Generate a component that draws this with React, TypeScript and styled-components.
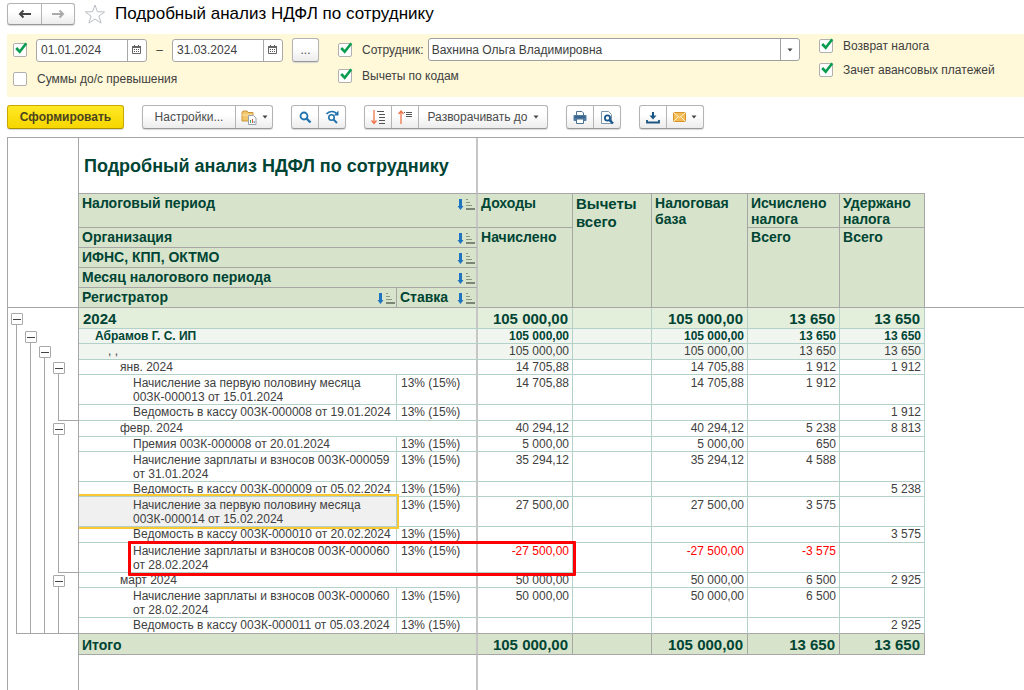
import React, { useState } from "react";
import styled, { createGlobalStyle, css } from "styled-components";

const ink = "#404040";
const green = "#004434";
const gridLine = "#b3d1c8";
const grayLine = "#a6a6a6";
const paleLine = "#c6c6c6";
const headFill = "#d7e4cb";

const GlobalStyle = createGlobalStyle`
  *, *::before, *::after { box-sizing: border-box; }
  body {
    margin: 0;
    background: #fff;
    color: ${ink};
    font: 12px/16px "Liberation Sans", Arial, sans-serif;
  }
  button, input, select { font: inherit; color: inherit; margin: 0; }
`;

const Page = styled.div`
  display: flex;
  flex-direction: column;
  min-height: 100vh;
  padding-left: 7px;
`;

/* ---------- window header ---------- */

const WindowHeader = styled.header`
  display: flex;
  align-items: center;
  height: 28px;
  margin-bottom: 6px;
`;

const PageTitle = styled.h1`
  margin: 0 0 0 9px;
  font-size: 17px;
  line-height: 20px;
  font-weight: 400;
  color: #000;
`;

const StarButton = styled.button`
  display: flex;
  padding: 0;
  margin-left: 9px;
  border: 0;
  background: none;
`;

/* ---------- buttons ---------- */

const ButtonGroup = styled.div<{ $height?: number }>`
  display: flex;
  height: ${(p) => p.$height ?? 24}px;
  border: 1px solid #b4b4b4;
  border-bottom-color: #989898;
  border-radius: 3px;
  background: linear-gradient(#fff 40%, #ececec);
  box-shadow: 0 1px 1px #d8d8d8;
`;

const MoreGroup = styled(ButtonGroup)`
  margin-left: 9px;
`;

const ToolButton = styled.button<{ $width: number }>`
  display: flex;
  align-items: center;
  justify-content: center;
  gap: 5px;
  width: ${(p) => p.$width}px;
  padding: 0;
  border: 0;
  background: none;
  color: #4c4c4c;
  white-space: nowrap;
  & + & { border-left: 1px solid #b4b4b4; }
`;

const PrimaryButton = styled.button`
  width: 117px;
  height: 24px;
  padding: 0;
  border: 1px solid #c9a800;
  border-bottom-color: #a89000;
  border-radius: 3px;
  background: linear-gradient(#ffe825, #f7d600);
  box-shadow: 0 1px 1px #d8d8d8;
  color: #4a4420;
  font-weight: 700;
`;

const Toolbar = styled.div`
  display: flex;
  align-items: center;
  gap: 18px;
  height: 40px;
`;

/* ---------- filter panel ---------- */

const FilterPanel = styled.section`
  display: flex;
  height: 63px;
  padding: 4px 0 0 6px;
  background: #fff9d9;
`;

const FilterColumn = styled.div<{ $gap: number }>`
  display: flex;
  flex-direction: column;
  gap: ${(p) => p.$gap}px;
`;

const WideColumn = styled(FilterColumn)`
  flex: 1;
  margin: 0 19px;
`;

const SideColumn = styled(FilterColumn)`
  width: 205px;
`;

const FilterRow = styled.div<{ $height: number }>`
  display: flex;
  align-items: center;
  height: ${(p) => p.$height}px;
`;

const PeriodRow = styled(FilterRow)`
  & > label { margin-right: 9px; }
`;

const CheckLabel = styled.label`
  display: inline-flex;
  align-items: center;
  gap: 10px;
  white-space: nowrap;
`;

const CheckBox = styled.span`
  position: relative;
  display: block;
  width: 14px;
  height: 14px;
  input {
    display: block;
    appearance: none;
    width: 14px;
    height: 14px;
    border: 1px solid #b0b0b0;
    border-radius: 2px;
    background: #fff;
  }
  svg {
    position: absolute;
    left: 2px;
    top: -1px;
    pointer-events: none;
  }
`;

const Field = styled.div`
  display: flex;
  width: 111px;
  height: 23px;
  border: 1px solid #a8a8a8;
  border-radius: 3px;
  background: #fff;
  overflow: hidden;
  input {
    flex: 1;
    min-width: 0;
    padding: 0 0 0 4px;
    border: 0;
    background: none;
  }
  button {
    display: flex;
    align-items: center;
    justify-content: center;
    width: 19px;
    padding: 0;
    border: 0;
    border-left: 1px solid #a8a8a8;
    background: none;
  }
`;

const Dash = styled.span`
  width: 25px;
  text-align: center;
`;

const ComboBox = styled.div`
  display: grid;
  grid-template-columns: 1fr 19px;
  flex: 1;
  height: 23px;
  margin-left: 4px;
  border: 1px solid #a0a0a0;
  border-radius: 3px;
  background: #fff;
  select {
    grid-area: 1 / 1 / 2 / 3;
    appearance: none;
    padding: 0 20px 0 3px;
    border: 0;
    background: none;
  }
  span {
    grid-area: 1 / 2;
    display: flex;
    align-items: center;
    justify-content: center;
    border-left: 1px solid #a0a0a0;
    pointer-events: none;
  }
`;

/* ---------- report ---------- */

const Report = styled.main`
  display: flex;
  flex: 1;
  flex-direction: column;
  border-top: 1px solid ${grayLine};
  border-left: 1px solid ${grayLine};
`;

const Table = styled.table`
  width: 100%;
  table-layout: fixed;
  border-collapse: separate;
  border-spacing: 0;
  th, td { padding: 0; vertical-align: top; }
`;

const Col = styled.col<{ $width: number }>`
  width: ${(p) => p.$width}px;
`;

const Corner = styled.td`
  border-right: 1px solid ${grayLine};
  border-bottom: 1px solid ${grayLine};
`;

const TitleCell = styled.th`
  height: 56px;
  border-right: 2px solid ${paleLine};
  border-bottom: 1px solid ${grayLine};
  color: ${green};
  font-size: 18px;
  line-height: 56px;
  text-align: left;
  white-space: nowrap;
`;

const TitleText = styled.div`
  height: 55px;
  padding-left: 5px;
`;

const TitleRest = styled.td`
  border-bottom: 1px solid ${grayLine};
`;

const HeadCell = styled.th<{ $height: number; $large?: boolean; $frozen?: boolean }>`
  height: ${(p) => p.$height}px;
  border-right: ${(p) => (p.$frozen ? `2px solid ${paleLine}` : `1px solid ${grayLine}`)};
  border-bottom: 1px solid ${grayLine};
  background: ${headFill};
  color: ${green};
  font-size: ${(p) => (p.$large ? 15 : 14)}px;
  line-height: ${(p) => (p.$large ? 18 : 16)}px;
  text-align: left;
`;

const HeadInner = styled.div`
  display: flex;
  justify-content: space-between;
  padding: 1px 1px 0 3px;
  svg { margin-top: 3px; flex: none; }
`;

const HeadRest = styled.td`
  border-bottom: 1px solid ${grayLine};
`;

type Kind = "year" | "org" | "code" | "plain" | "total";

const rowFill: Record<Kind, string> = {
  year: "#e3eedb",
  org: "#f0f5ef",
  code: "#f0f5ef",
  plain: "#fff",
  total: headFill,
};

const Row = styled.tr<{ $kind: Kind; $height: number; $lastBody?: boolean }>`
  & > .cell {
    height: ${(p) => p.$height}px;
    padding-top: ${(p) => (p.$height === 30 ? 1 : p.$height === 21 ? 2 : 0)}px;
    background: ${(p) => rowFill[p.$kind]};
    border-right: 1px solid ${(p) => (p.$kind === "total" ? grayLine : gridLine)};
    border-bottom: 1px solid
      ${(p) => (p.$kind === "total" || p.$lastBody ? grayLine : gridLine)};
    line-height: 14px;
    ${(p) =>
      (p.$kind === "year" || p.$kind === "total") &&
      css`
        color: ${green};
        font-size: 15px;
        line-height: 18px;
        font-weight: 700;
      `}
    ${(p) =>
      p.$kind === "org" &&
      css`
        color: ${green};
        font-weight: 700;
      `}
  }
  & > .cell.frozen { border-right: 2px solid ${paleLine}; }
  & > .cell.selected { background: #f0f0f0; }
`;

const NameCell = styled.th<{ $indent: number }>`
  position: relative;
  font-weight: 400;
  text-align: left;
  & > div { padding-left: ${(p) => p.$indent}px; }
`;

const TotalLabel = styled.div`
  font-size: 14px;
`;

const RateCell = styled.td`
  & > div { padding-left: 4px; }
`;

const NumberCell = styled.td<{ $negative?: boolean; $large?: boolean }>`
  text-align: right;
  & > div {
    padding-right: ${(p) => (p.$large ? 4 : 3)}px;
    ${(p) => p.$negative && "color: #f00;"}
  }
`;

const Selection = styled.span`
  position: absolute;
  z-index: 1;
  inset: -3px -3px -3px 0;
  border: 2px solid #f9c832;
  border-left: 0;
  pointer-events: none;
`;

const RedFrame = styled.span`
  position: absolute;
  z-index: 2;
  left: 49px;
  top: -2px;
  width: 448px;
  height: 35px;
  border: 3px solid #f00;
  border-radius: 1px;
  pointer-events: none;
`;

const GutterCell = styled.td<{ $closeFrom?: number }>`
  position: relative;
  border-right: 1px solid ${grayLine};
  ${(p) =>
    p.$closeFrom !== undefined &&
    css`
      &::after {
        content: "";
        position: absolute;
        right: 0;
        bottom: 0;
        left: ${8 + 14 * p.$closeFrom}px;
        height: 1px;
        background: ${grayLine};
      }
    `}
`;

const Lanes = styled.div<{ $height: number }>`
  display: flex;
  height: ${(p) => p.$height}px;
  padding-left: 2px;
`;

const Lane = styled.div`
  display: flex;
  flex-direction: column;
  width: 14px;
`;

const Stem = styled.span`
  flex: 1;
  width: 1px;
  margin-left: 6px;
  background: ${grayLine};
`;

const Toggle = styled.button<{ $top: number }>`
  display: flex;
  align-items: center;
  justify-content: center;
  width: 12px;
  height: 12px;
  margin: ${(p) => p.$top}px 0 0 1px;
  padding: 0;
  border: 1px solid #a8a8a8;
  border-radius: 1px;
  background: #fff;
  &::before {
    content: "";
    width: 8px;
    height: 1px;
    background: #444;
  }
`;

const Tail = styled.div`
  display: grid;
  flex: 1;
  grid-template-columns: 71px 399px 1fr;
  span:nth-child(1) { border-right: 1px solid ${grayLine}; }
  span:nth-child(2) { border-right: 2px solid ${paleLine}; }
`;

/* ---------- icons ---------- */

const ArrowIcon = ({ back, color }: { back?: boolean; color: string }) => (
  <svg width="14" height="10" viewBox="0 0 14 10" fill="none" stroke={color} strokeWidth="2">
    {back ? <path d="M13 5H2M5.500 1.500L2 5l3.500 3.500" /> : <path d="M1 5h11M8.500 1.500L12 5 8.500 8.500" />}
  </svg>
);

const StarIcon = () => (
  <svg width="22" height="20" viewBox="0 0 22 20" fill="#fff" stroke="#b9bec4" strokeWidth="1">
    <path d="M11 1l2.400 6.700 7.200.2-5.700 4.200 2.200 7L11 15l-6.100 4.100 2.200-7L1.400 7.900l7.200-.2z" />
  </svg>
);

const CheckMark = () => (
  <svg width="13" height="13" viewBox="0 0 13 13" fill="none" stroke="#0a9d50" strokeWidth="2.600">
    <path d="M1.200 6l3.500 3.700L11.300 1.300" />
  </svg>
);

const CalendarIcon = () => (
  <svg width="10" height="10" viewBox="0 0 10 10">
    <path d="M0.500 1.500h8v7h-8z" fill="#fff" stroke="#666" />
    <path d="M0 1h9v2H0zM2 0h1v2H2zM6 0h1v2H6z" fill="#666" />
    <path d="M2 4h1v1H2zM4 4h1v1H4zM6 4h1v1H6zM2 6h1v1H2zM4 6h1v1H4zM6 6h1v1H6z" fill="#555" />
  </svg>
);

const Caret = () => (
  <svg width="6" height="4" viewBox="0 0 6 4">
    <path d="M0.500 0.500h5L3 3.500z" fill="#444" />
  </svg>
);

const FolderIcon = () => (
  <svg width="16" height="15" viewBox="0 0 16 15">
    <path d="M1 2.500L2 1h4l1 1.500h5V11H1z" fill="#f2c66b" stroke="#c9953a" />
    <path d="M1 5h11" stroke="#fbe3ad" />
    <path d="M7.500 5.500h5l2.500 2.500v6.500H7.500z" fill="#fff" stroke="#9aa3ad" />
    <path d="M9.500 10v3" stroke="#3fae6a" />
    <path d="M11.500 9v4" stroke="#e0574a" />
    <path d="M13.200 11v2" stroke="#3d7fc0" />
  </svg>
);

const SearchIcon = () => (
  <svg width="13" height="13" viewBox="0 0 13 13" fill="none" stroke="#2273ad">
    <circle cx="5" cy="5" r="3.500" strokeWidth="1.800" />
    <path d="M7.500 7.500l4 4" strokeWidth="2.400" />
  </svg>
);

const SearchNextIcon = () => (
  <svg width="15" height="14" viewBox="0 0 15 14" fill="none" stroke="#2273ad">
    <circle cx="6.500" cy="7.500" r="2.700" strokeWidth="1.600" />
    <path d="M8.500 9.500l3.500 3.500" strokeWidth="2" />
    <path d="M1.500 4C4 1 9 0.500 11.500 3.500" strokeWidth="1.600" />
    <path d="M13.500 0.500v5H8.800z" fill="#2273ad" stroke="none" />
  </svg>
);

const ExpandIcon = () => (
  <svg width="15" height="15" viewBox="0 0 15 15" fill="none">
    <path d="M3 0v13M0.500 10.500L3 13.500l2.500-3" stroke="#f0764a" strokeWidth="1.300" />
    <path d="M6 1.500h7M8 4.500h6M8 7.500h6M8 10.500h6M8 13.500h6" stroke="#555" />
  </svg>
);

const CollapseIcon = () => (
  <svg width="15" height="15" viewBox="0 0 15 15" fill="none">
    <path d="M3 14V1.500M0.500 4L3 1l2.500 3" stroke="#f0764a" strokeWidth="1.300" />
    <path d="M6 2.500h1M8 2.500h6M8 4.500h6M8 6.500h6" stroke="#555" />
  </svg>
);

const PrintIcon = () => (
  <svg width="14" height="13" viewBox="0 0 14 13">
    <path d="M3.500 4.500v-4h5.500l1.500 1.500v2.500" fill="#fff" stroke="#4f7190" />
    <rect x="0.500" y="4" width="13" height="6" rx="1" fill="#4f7ba3" />
    <path d="M2 6h10" stroke="#244f76" />
    <path d="M3.500 8h7v4.500h-7z" fill="#fff" stroke="#4f7190" />
  </svg>
);

const PreviewIcon = () => (
  <svg width="14" height="15" viewBox="0 0 14 15" fill="none">
    <path d="M1.500 1.500h7l3 3v9h-10z" fill="#fff" stroke="#7e95aa" />
    <circle cx="7.500" cy="8" r="2.600" stroke="#17578c" strokeWidth="1.800" fill="#fff" />
    <path d="M9.500 10l3.500 3.500" stroke="#17578c" strokeWidth="2.400" />
  </svg>
);

const SaveIcon = () => (
  <svg width="14" height="13" viewBox="0 0 14 13" fill="none" stroke="#1b5683">
    <path d="M7 1v6" strokeWidth="2" />
    <path d="M3.500 4.500h7L7 8.500z" fill="#1b5683" stroke="none" />
    <path d="M1 9v2.500h12V9" strokeWidth="1.800" />
  </svg>
);

const MailIcon = () => (
  <svg width="13" height="10" viewBox="0 0 13 10" fill="none">
    <rect x="0.500" y="0.500" width="12" height="9" rx="1" fill="#f3bc58" stroke="#d8932a" />
    <path d="M1 1l5.500 4.500L12 1M1 9l4-4M12 9L8 5" stroke="#fff0c8" />
  </svg>
);

const SortIcon = () => (
  <svg width="18" height="13" viewBox="0 0 18 13" fill="none">
    <path d="M3.500 1v8" stroke="#1f74bf" strokeWidth="3" />
    <path d="M0.500 8h6L3.500 12z" fill="#1f74bf" />
    <path d="M9 1.500h2M9 4.500h4M9 7.500h6" stroke="#8d9685" />
    <path d="M9 11h9" stroke="#666d60" strokeWidth="1.600" />
  </svg>
);

/* ---------- data ---------- */

type LaneState = "node" | "line";

interface ReportRow {
  kind: Kind;
  height: number;
  indent: number;
  name: string[];
  rate?: string;
  values: [string, string, string, string, string];
  lanes: LaneState[];
  closeFrom?: number;
  mark?: "selected" | "framed";
}

const RATE = "13% (15%)";
const inside: LaneState[] = ["line", "line", "line", "line"];
const month: LaneState[] = ["line", "line", "line", "node"];

const rows: ReportRow[] = [
  { kind: "year", height: 21, indent: 4, name: ["2024"], values: ["105 000,00", "", "105 000,00", "13 650", "13 650"], lanes: ["node"] },
  { kind: "org", height: 15, indent: 16, name: ["Абрамов Г. С. ИП"], values: ["105 000,00", "", "105 000,00", "13 650", "13 650"], lanes: ["line", "node"] },
  { kind: "code", height: 16, indent: 29, name: [", ,"], values: ["105 000,00", "", "105 000,00", "13 650", "13 650"], lanes: ["line", "line", "node"] },
  { kind: "plain", height: 15, indent: 41, name: ["янв. 2024"], values: ["14 705,88", "", "14 705,88", "1 912", "1 912"], lanes: month },
  { kind: "plain", height: 30, indent: 54, name: ["Начисление за первую половину месяца", "00ЗК-000013 от 15.01.2024"], rate: RATE, values: ["14 705,88", "", "14 705,88", "1 912", ""], lanes: inside },
  { kind: "plain", height: 16, indent: 54, name: ["Ведомость в кассу 00ЗК-000008 от 19.01.2024"], rate: RATE, values: ["", "", "", "", "1 912"], lanes: inside, closeFrom: 3 },
  { kind: "plain", height: 16, indent: 41, name: ["февр. 2024"], values: ["40 294,12", "", "40 294,12", "5 238", "8 813"], lanes: month },
  { kind: "plain", height: 15, indent: 54, name: ["Премия 00ЗК-000008 от 20.01.2024"], rate: RATE, values: ["5 000,00", "", "5 000,00", "650", ""], lanes: inside },
  { kind: "plain", height: 30, indent: 54, name: ["Начисление зарплаты и взносов 00ЗК-000059", "от 31.01.2024"], rate: RATE, values: ["35 294,12", "", "35 294,12", "4 588", ""], lanes: inside },
  { kind: "plain", height: 15, indent: 54, name: ["Ведомость в кассу 00ЗК-000009 от 05.02.2024"], rate: RATE, values: ["", "", "", "", "5 238"], lanes: inside },
  { kind: "plain", height: 30, indent: 54, name: ["Начисление за первую половину месяца", "00ЗК-000014 от 15.02.2024"], rate: RATE, values: ["27 500,00", "", "27 500,00", "3 575", ""], lanes: inside, mark: "selected" },
  { kind: "plain", height: 16, indent: 54, name: ["Ведомость в кассу 00ЗК-000010 от 20.02.2024"], rate: RATE, values: ["", "", "", "", "3 575"], lanes: inside },
  { kind: "plain", height: 30, indent: 54, name: ["Начисление зарплаты и взносов 00ЗК-000060", "от 28.02.2024"], rate: RATE, values: ["-27 500,00", "", "-27 500,00", "-3 575", ""], lanes: inside, closeFrom: 3, mark: "framed" },
  { kind: "plain", height: 15, indent: 41, name: ["март 2024"], values: ["50 000,00", "", "50 000,00", "6 500", "2 925"], lanes: month },
  { kind: "plain", height: 30, indent: 54, name: ["Начисление зарплаты и взносов 00ЗК-000060", "от 28.02.2024"], rate: RATE, values: ["50 000,00", "", "50 000,00", "6 500", ""], lanes: inside },
  { kind: "plain", height: 16, indent: 54, name: ["Ведомость в кассу 00ЗК-000011 от 05.03.2024"], rate: RATE, values: ["", "", "", "", "2 925"], lanes: inside, closeFrom: 0 },
  { kind: "total", height: 21, indent: 3, name: ["Итого"], values: ["105 000,00", "", "105 000,00", "13 650", "13 650"], lanes: [] },
];

/* ---------- parts ---------- */

function Check({ label, text, on }: { label: string; text?: boolean; on?: boolean }) {
  const [checked, setChecked] = useState(!!on);
  return (
    <CheckLabel>
      <CheckBox>
        <input
          type="checkbox"
          aria-label={label}
          checked={checked}
          onChange={(e) => setChecked(e.target.checked)}
        />
        {checked && <CheckMark />}
      </CheckBox>
      {text && label}
    </CheckLabel>
  );
}

function DateField({ label, value }: { label: string; value: string }) {
  return (
    <Field>
      <input type="text" aria-label={label} defaultValue={value} />
      <button type="button" aria-label="Выбрать дату">
        <CalendarIcon />
      </button>
    </Field>
  );
}

function Head({
  children,
  sort,
  ...rest
}: {
  children: React.ReactNode;
  sort?: boolean;
  $height: number;
  $large?: boolean;
  $frozen?: boolean;
  colSpan?: number;
  rowSpan?: number;
}) {
  return (
    <HeadCell {...rest}>
      <HeadInner>
        <span>{children}</span>
        {sort && <SortIcon />}
      </HeadInner>
    </HeadCell>
  );
}

function BodyRow({ row, lastBody }: { row: ReportRow; lastBody: boolean }) {
  const large = row.kind === "year" || row.kind === "total";
  const nameClass = row.mark === "selected" ? "cell selected" : row.rate ? "cell" : "cell frozen";
  const Line = row.kind === "total" ? TotalLabel : "div";
  return (
    <Row $kind={row.kind} $height={row.height} $lastBody={lastBody}>
      <GutterCell $closeFrom={row.closeFrom}>
        <Lanes $height={row.height}>
          {row.lanes.map((lane, i) => (
            <Lane key={i}>
              {lane === "node" && (
                <Toggle type="button" aria-label="Свернуть" $top={large ? 5 : 2} />
              )}
              <Stem />
            </Lane>
          ))}
        </Lanes>
      </GutterCell>
      <NameCell className={nameClass} scope="row" colSpan={row.rate ? 1 : 2} $indent={row.indent}>
        {row.name.map((line) => (
          <Line key={line}>{line}</Line>
        ))}
        {row.mark === "selected" && <Selection />}
        {row.mark === "framed" && <RedFrame />}
      </NameCell>
      {row.rate && (
        <RateCell className="cell frozen">
          <div>{row.rate}</div>
        </RateCell>
      )}
      {row.values.map((v, i) => (
        <NumberCell key={i} className="cell" $negative={v.startsWith("-")} $large={large}>
          <div>{v}</div>
        </NumberCell>
      ))}
      <td />
    </Row>
  );
}

export default function App() {
  return (
    <Page>
      <GlobalStyle />
      <WindowHeader>
        <ButtonGroup $height={22}>
          <ToolButton $width={33} aria-label="Назад">
            <ArrowIcon back color="#444" />
          </ToolButton>
          <ToolButton $width={33} aria-label="Вперед">
            <ArrowIcon color="#aaa" />
          </ToolButton>
        </ButtonGroup>
        <StarButton aria-label="В избранное">
          <StarIcon />
        </StarButton>
        <PageTitle>Подробный анализ НДФЛ по сотруднику</PageTitle>
      </WindowHeader>

      <FilterPanel>
        <FilterColumn $gap={9}>
          <PeriodRow $height={24}>
            <Check label="Период" on />
            <DateField label="Начало периода" value="01.01.2024" />
            <Dash>–</Dash>
            <DateField label="Конец периода" value="31.03.2024" />
            <MoreGroup>
              <ToolButton $width={25}>...</ToolButton>
            </MoreGroup>
          </PeriodRow>
          <FilterRow $height={16}>
            <Check label="Суммы до/с превышения" text />
          </FilterRow>
        </FilterColumn>
        <WideColumn $gap={7}>
          <FilterRow $height={23}>
            <Check label="Сотрудник:" text on />
            <ComboBox>
              <select aria-label="Сотрудник">
                <option>Вахнина Ольга Владимировна</option>
              </select>
              <span>
                <Caret />
              </span>
            </ComboBox>
          </FilterRow>
          <FilterRow $height={16}>
            <Check label="Вычеты по кодам" text on />
          </FilterRow>
        </WideColumn>
        <SideColumn $gap={8}>
          <FilterRow $height={16}>
            <Check label="Возврат налога" text on />
          </FilterRow>
          <FilterRow $height={16}>
            <Check label="Зачет авансовых платежей" text on />
          </FilterRow>
        </SideColumn>
      </FilterPanel>

      <Toolbar>
        <PrimaryButton type="button">Сформировать</PrimaryButton>
        <ButtonGroup>
          <ToolButton $width={92}>Настройки...</ToolButton>
          <ToolButton $width={37} aria-label="Варианты настроек">
            <FolderIcon />
            <Caret />
          </ToolButton>
        </ButtonGroup>
        <ButtonGroup>
          <ToolButton $width={26} aria-label="Найти">
            <SearchIcon />
          </ToolButton>
          <ToolButton $width={27} aria-label="Найти далее">
            <SearchNextIcon />
          </ToolButton>
        </ButtonGroup>
        <ButtonGroup>
          <ToolButton $width={26} aria-label="Развернуть">
            <ExpandIcon />
          </ToolButton>
          <ToolButton $width={27} aria-label="Свернуть">
            <CollapseIcon />
          </ToolButton>
          <ToolButton $width={129}>
            Разворачивать до <Caret />
          </ToolButton>
        </ButtonGroup>
        <ButtonGroup>
          <ToolButton $width={26} aria-label="Печать">
            <PrintIcon />
          </ToolButton>
          <ToolButton $width={27} aria-label="Просмотр">
            <PreviewIcon />
          </ToolButton>
        </ButtonGroup>
        <ButtonGroup>
          <ToolButton $width={26} aria-label="Сохранить">
            <SaveIcon />
          </ToolButton>
          <ToolButton $width={37} aria-label="Отправить">
            <MailIcon />
            <Caret />
          </ToolButton>
        </ButtonGroup>
      </Toolbar>

      <Report>
        <Table>
          <colgroup>
            <Col $width={71} />
            <Col $width={318} />
            <Col $width={81} />
            <Col $width={95} />
            <Col $width={79} />
            <Col $width={96} />
            <Col $width={92} />
            <Col $width={85} />
            <col />
          </colgroup>
          <thead>
            <tr>
              <Corner rowSpan={6} />
              <TitleCell colSpan={2}>
                <TitleText>Подробный анализ НДФЛ по сотруднику</TitleText>
              </TitleCell>
              <TitleRest colSpan={5} />
              <td />
            </tr>
            <tr>
              <Head $height={34} colSpan={2} $frozen sort>Налоговый период</Head>
              <Head $height={34}>Доходы</Head>
              <Head $height={114} rowSpan={5} $large>Вычеты всего</Head>
              <Head $height={114} rowSpan={5}>Налоговая база</Head>
              <Head $height={34}>Исчислено налога</Head>
              <Head $height={34}>Удержано налога</Head>
              <HeadRest rowSpan={5} />
            </tr>
            <tr>
              <Head $height={20} colSpan={2} $frozen sort>Организация</Head>
              <Head $height={80} rowSpan={4}>Начислено</Head>
              <Head $height={80} rowSpan={4}>Всего</Head>
              <Head $height={80} rowSpan={4}>Всего</Head>
            </tr>
            <tr>
              <Head $height={20} colSpan={2} $frozen sort>ИФНС, КПП, ОКТМО</Head>
            </tr>
            <tr>
              <Head $height={20} colSpan={2} $frozen sort>Месяц налогового периода</Head>
            </tr>
            <tr>
              <Head $height={20} sort>Регистратор</Head>
              <Head $height={20} $frozen sort>Ставка</Head>
            </tr>
          </thead>
          <tbody>
            {rows.map((row, i) => (
              <BodyRow key={i} row={row} lastBody={i === rows.length - 2} />
            ))}
          </tbody>
        </Table>
        <Tail>
          <span />
          <span />
        </Tail>
      </Report>
    </Page>
  );
}
